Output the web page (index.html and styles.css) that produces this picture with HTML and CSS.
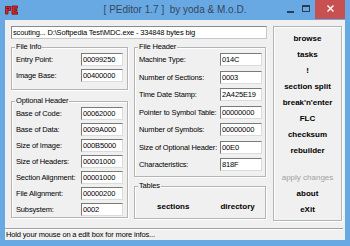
FILE: index.html
```html
<!DOCTYPE html>
<html>
<head>
<meta charset="utf-8">
<link rel="stylesheet" href="styles.css">
</head>
<body>
<div class="window">
  <div class="titlebar">
    <div class="tb-left">
      <svg class="appicon" width="13" height="10" viewBox="0 0 13 10">
        <path d="M0.5 1.5 L5.5 1.5 L5.5 5.5 L3 5.5 L3 9 L0.5 9 Z" fill="#d8262c" stroke="#7a1010" stroke-width="0.8"/>
        <path d="M7 1 L12.5 1 L12.5 3.2 L9.5 3.2 L9.5 4.4 L12 4.4 L12 6 L9.5 6 L9.5 7 L12.5 7 L12.5 9.2 L7 9.2 Z" fill="#d8262c" stroke="#7a1010" stroke-width="0.8"/>
        <rect x="2" y="2.8" width="2" height="1.4" fill="#5a0a0a"/>
      </svg>
    </div>
    <div class="title">[ PEditor 1.7 ]&nbsp; by yoda &amp; M.o.D.</div>
    <div class="tb-right">
      <div class="ctl ctl-min"><span class="min-bar"></span></div>
      <div class="ctl ctl-max"><span class="max-box"></span></div>
      <div class="ctl ctl-close">
        <svg width="9" height="9" viewBox="0 0 9 9"><path d="M1.5 1.5 L7.5 7.5 M7.5 1.5 L1.5 7.5" stroke="#fff" stroke-width="1.4"/></svg>
      </div>
    </div>
  </div>
  <div class="client">
    <div class="main">
      <div class="leftarea">
        <div class="edit path">scouting... D:\Softpedia Test\MDC.exe - 334848 bytes big</div>
        <div class="cols">
          <div class="col col-a">
            <div class="group g-fileinfo">
              <div class="legend">File Info</div>
              <div class="rows">
                <div class="row"><span>Entry Point:</span><div class="edit val">00099250</div></div>
                <div class="row"><span>Image Base:</span><div class="edit val">00400000</div></div>
              </div>
            </div>
            <div class="group g-optional">
              <div class="legend">Optional Header</div>
              <div class="rows">
                <div class="row"><span>Base of Code:</span><div class="edit val">00062000</div></div>
                <div class="row"><span>Base of Data:</span><div class="edit val">0009A000</div></div>
                <div class="row"><span>Size of Image:</span><div class="edit val">000B5000</div></div>
                <div class="row"><span>Size of Headers:</span><div class="edit val">00001000</div></div>
                <div class="row"><span>Section Alignment:</span><div class="edit val">00001000</div></div>
                <div class="row"><span>File Alignment:</span><div class="edit val">00000200</div></div>
                <div class="row"><span>Subsystem:</span><div class="edit val">0002</div></div>
              </div>
            </div>
          </div>
          <div class="col col-b">
            <div class="group g-fileheader">
              <div class="legend">File Header</div>
              <div class="rows rows-wide">
                <div class="row"><span>Machine Type:</span><div class="edit val">014C</div></div>
                <div class="row"><span>Number of Sections:</span><div class="edit val">0003</div></div>
                <div class="row"><span>Time Date Stamp:</span><div class="edit val">2A425E19</div></div>
                <div class="row"><span>Pointer to Symbol Table:</span><div class="edit val">00000000</div></div>
                <div class="row"><span>Number of Symbols:</span><div class="edit val">00000000</div></div>
                <div class="row"><span>Size of Optional Header:</span><div class="edit val">00E0</div></div>
                <div class="row"><span>Characteristics:</span><div class="edit val">818F</div></div>
              </div>
            </div>
            <div class="group g-tables">
              <div class="legend">Tables</div>
              <div class="tablebtns">
                <div class="btn">sections</div>
                <div class="btn">directory</div>
              </div>
            </div>
          </div>
        </div>
      </div>
      <div class="panel">
        <div class="btn pbtn">browse</div>
        <div class="btn pbtn">tasks</div>
        <div class="btn pbtn">!</div>
        <div class="btn pbtn">section split</div>
        <div class="btn pbtn">break'n'enter</div>
        <div class="btn pbtn">FLC</div>
        <div class="btn pbtn">checksum</div>
        <div class="btn pbtn">rebuilder</div>
        <div class="btn pbtn disabled">apply changes</div>
        <div class="btn pbtn">about</div>
        <div class="btn pbtn">eXit</div>
      </div>
    </div>
    <div class="status">Hold your mouse on a edit box for more infos...</div>
  </div>
</div>
</body>
</html>
```

FILE: styles.css
```css
* { box-sizing: border-box; }
html, body {
  margin: 0;
  padding: 0;
  width: 350px;
  height: 246px;
  overflow: hidden;
  background: #69a9e3;
}
.window {
  width: 350px;
  height: 246px;
  display: flex;
  flex-direction: column;
  background: #69a9e3;
  font-family: "Liberation Sans", Arial, sans-serif;
}
.titlebar {
  height: 20px;
  display: grid;
  grid-template-columns: 1fr auto 1fr;
  align-items: start;
}
.tb-left { display: flex; padding: 5px 0 0 5px; }
.appicon { display: block; }
.title {
  font-size: 10px;
  line-height: 12px;
  padding-top: 4px;
  color: #33475c;
  white-space: nowrap;
}
.tb-right {
  display: flex;
  justify-content: flex-end;
  padding-right: 5px;
}
.ctl {
  height: 19px;
  display: flex;
  align-items: center;
  justify-content: center;
}
.ctl-min { width: 13px; margin-right: 3px; }
.min-bar { width: 7px; height: 2px; background: #2c3e50; margin-top: 4px; }
.ctl-max { width: 12px; margin-right: 3px; }
.max-box {
  width: 8px;
  height: 7px;
  border: 1px solid #2c3e50;
  border-top-width: 2px;
  margin-top: -3px;
}
.ctl-close {
  width: 30px;
  background: #c75050;
  padding-bottom: 2px;
}
.client {
  margin: 0 5px;
  height: 220px;
  background: #f0f0f0;
  padding-top: 6px;
  display: flex;
  flex-direction: column;
  font-size: 7.5px;
  letter-spacing: -0.15px;
  color: #000;
}
.main {
  display: flex;
  gap: 6px;
  height: 195px;
  margin-left: 6px;
}
.leftarea { width: 256px; display: flex; flex-direction: column; }
.edit {
  background: #fff;
  border: 1px solid;
  border-color: #7a7a7a #dcdcdc #dcdcdc #7a7a7a;
  white-space: nowrap;
  overflow: hidden;
}
.path {
  height: 13px;
  line-height: 11px;
  padding-left: 1px;
  border-color: #8a8a8a #c8c8c8 #c8c8c8 #8a8a8a;
}
.cols {
  margin-top: 8px;
  display: flex;
  gap: 6px;
}
.col { display: flex; flex-direction: column; }
.col-a { width: 117px; gap: 11px; }
.col-b { width: 132px; gap: 9px; }
.group {
  border: 1px solid #b4b4b4;
  box-shadow: inset 1px 1px 0 #fff, 1px 1px 0 #fff;
  padding: 0 4px;
}
.legend {
  height: 10px;
  line-height: 10px;
  margin: -6px 0 1px -1px;
  padding: 0 1px;
  width: fit-content;
  background: #f0f0f0;
}
.rows { display: flex; flex-direction: column; gap: 3px; }
.rows-wide { gap: 4.5px; }
.row {
  height: 13px;
  display: flex;
  align-items: center;
  justify-content: space-between;
  white-space: nowrap;
}
.val {
  width: 42px;
  height: 13px;
  line-height: 11px;
  padding-left: 1px;
}
.g-fileinfo { padding-bottom: 7px; }
.g-optional { padding-bottom: 1px; }
.g-fileheader { padding: 0 3px 5px 4px; }
.g-tables { padding-bottom: 5px; }
.tablebtns {
  display: flex;
  gap: 31px;
  margin-top: 9px;
  padding-left: 18px;
  height: 13px;
  align-items: center;
}
.btn {
  font-weight: bold;
  font-size: 8px;
  letter-spacing: 0;
  white-space: nowrap;
}
.panel {
  width: 69px;
  height: 195px;
  border: 1px solid #b4b4b4;
  box-shadow: inset 1px 1px 0 #fff, 1px 1px 0 #fff;
  padding-top: 4px;
  display: flex;
  flex-direction: column;
}
.pbtn {
  height: 16px;
  line-height: 16px;
  text-align: center;
}
.disabled {
  font-weight: normal;
  color: #a0a0a0;
  margin-top: 11px;
}
.status {
  margin-top: 7px;
  margin-right: 2px;
  border-top: 1px solid #a0a0a0;
  box-shadow: inset 0 1px 0 #fff;
  padding-left: 1px;
  line-height: 11px;
  height: 12px;
  white-space: nowrap;
}
```
